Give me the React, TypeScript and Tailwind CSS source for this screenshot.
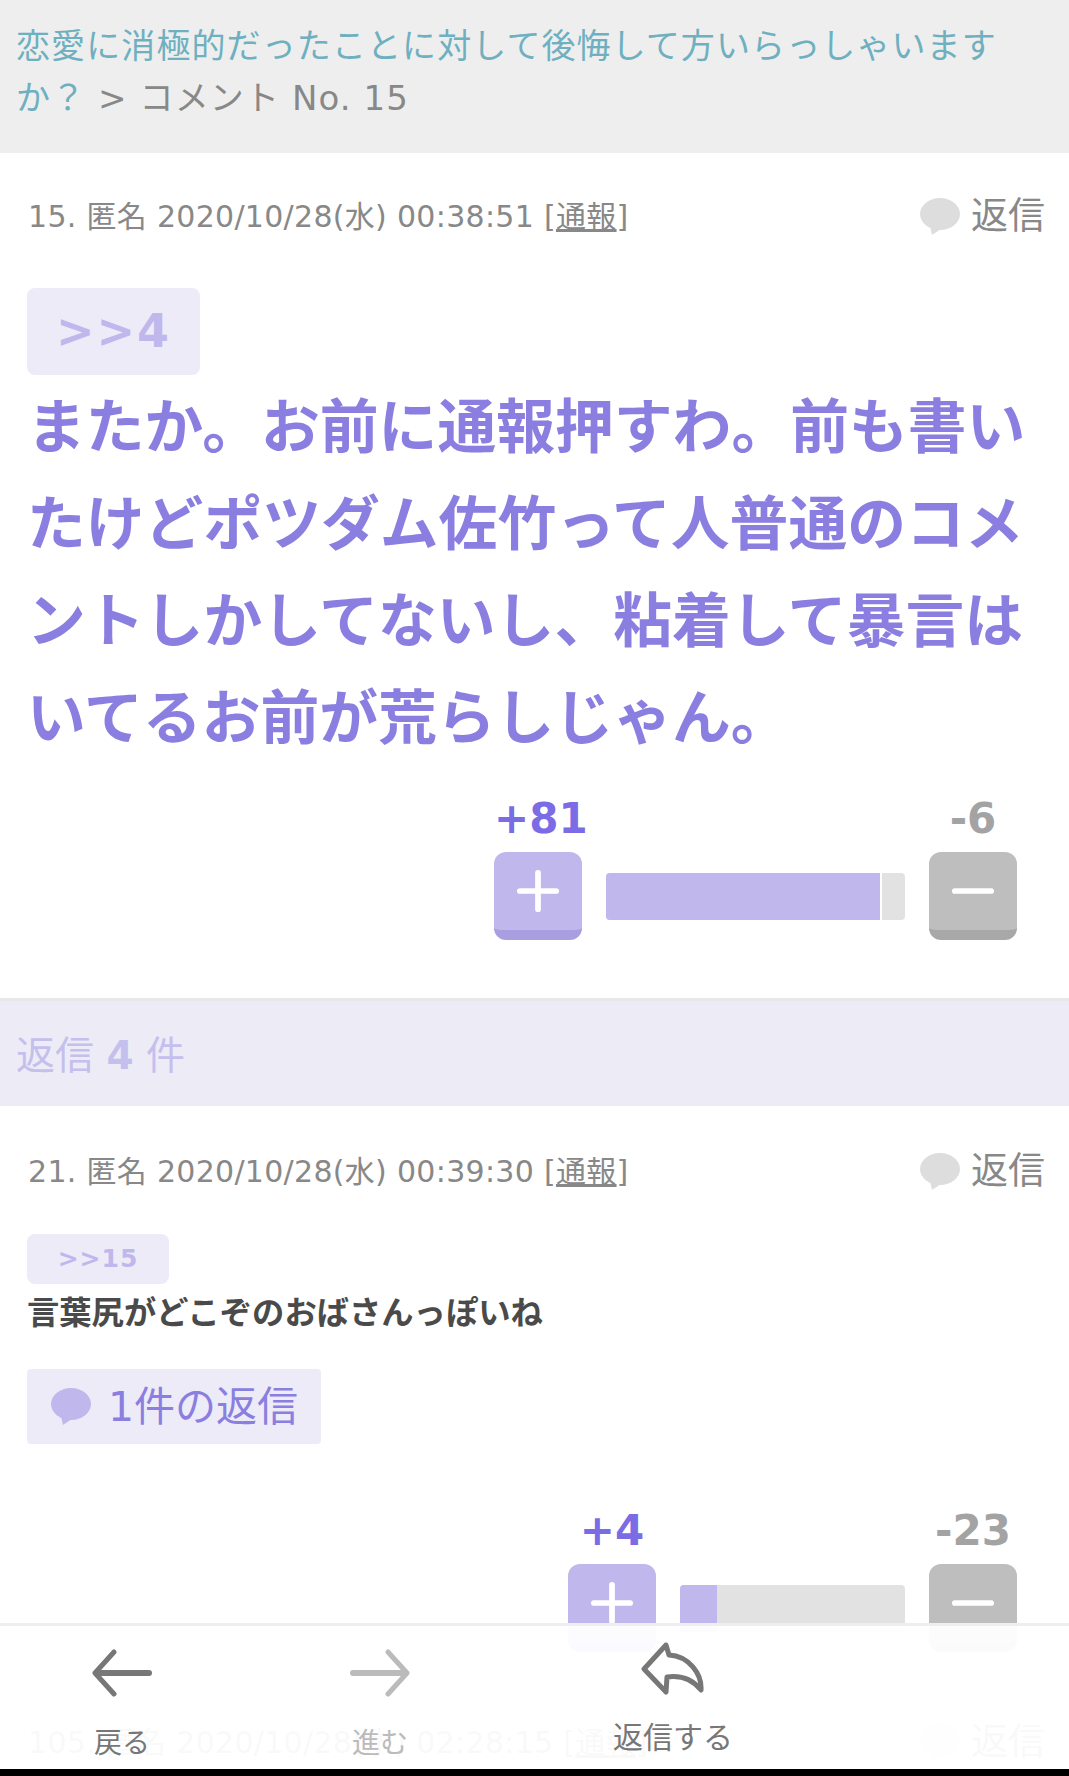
const BASE = "font-['DejaVu_Sans','Noto_Sans_CJK_JP',sans-serif]";

function Bubble({ className }: { className: string }) {
  return (
    <svg viewBox="0 0 40 38" className={className} fill="currentColor">
      <ellipse cx="20" cy="16" rx="20" ry="16" />
      <path d="M10 28 L12 37 L21 31 Z" />
    </svg>
  );
}

function Meta({ no, time }: { no: string; time: string }) {
  return (
    <div className="flex items-center justify-between pl-[28px] pr-[24px] text-[#888]">
      <p className="text-[30px] leading-[40px] tracking-[0.3px]">
        {no}. 匿名 2020/10/28(水) {time} [<span className="underline">通報</span>]
      </p>
      <div className="flex items-center gap-[11px]">
        <Bubble className="h-[38px] w-[40px] text-[#ddd]" />
        <span className="text-[37px] leading-[48px]">返信</span>
      </div>
    </div>
  );
}

function VoteButton({ kind }: { kind: "plus" | "minus" }) {
  const plus = kind === "plus";
  return (
    <div
      className={`flex h-[88px] w-[88px] shrink-0 items-center justify-center rounded-[12px] border-b-[10px] ${
        plus ? "border-[#a99fe0] bg-[#c0b8ec]" : "border-[#a8a8a8] bg-[#bebebe]"
      }`}
    >
      <svg viewBox="0 0 44 44" className="h-[42px] w-[42px]" stroke="white" strokeWidth="6" strokeLinecap="round">
        <path d="M3 22H41" />
        {plus && <path d="M22 3V41" />}
      </svg>
    </div>
  );
}

function Votes({ up, down, fill, width, divider }: { up: string; down: string; fill: number; width: number; divider?: boolean }) {
  return (
    <div className="flex justify-end pr-[52px]">
      <div className="flex flex-col" style={{ width }}>
        <div className="flex justify-between text-[42px] font-bold leading-[44px]">
          <span className="w-[88px] text-center text-[#7b6ce6]">{up}</span>
          <span className="w-[88px] text-center text-[#a3a3a3]">{down}</span>
        </div>
        <div className="mt-[11px] flex items-start">
          <VoteButton kind="plus" />
          <div className="mx-[24px] mt-[21px] flex h-[47px] flex-1 overflow-hidden rounded-[4px] bg-[#e2e2e2]">
            <div
              className={`h-full bg-[#c0b8ec] ${divider ? "border-r-[2px] border-white" : ""}`}
              style={{ width: fill }}
            />
          </div>
          <VoteButton kind="minus" />
        </div>
      </div>
    </div>
  );
}

export default function App() {
  return (
    <div className={`relative h-[1776px] overflow-hidden bg-white ${BASE}`}>
      <header className="h-[153px] bg-[#eeeeee] px-[16px] pt-[20px] text-[34px] leading-[52px] tracking-[1.1px] text-[#888]">
        <a className="text-[#6fb0c0]">恋愛に消極的だったことに対して後悔して方いらっしゃいますか？</a>
        <span> &gt; コメント No. 15</span>
      </header>

      <section className="pt-[40px]">
        <Meta no="15" time="00:38:51" />
        <div className="pt-[47px] pl-[27px] pr-[30px]">
          <div className="flex h-[87px] w-[173px] items-center justify-center rounded-[8px] bg-[#edebf8] text-[46px] font-bold tracking-[2px] text-[#c0b8ec]">
            &gt;&gt;4
          </div>
          <p className="mt-[4px] text-[58.8px] font-bold leading-[97px] text-[#8a7fe0]">
            またか。お前に通報押すわ。前も書いたけどポツダム佐竹って人普通のコメントしかしてないし、粘着して暴言はいてるお前が荒らしじゃん。
          </p>
        </div>
        <div className="mt-[30px]">
          <Votes up="+81" down="-6" fill={276} width={523} divider />
        </div>
      </section>

      <div className="mt-[58px] h-[108px] border-t-[3px] border-[#e8e8e8] bg-[#edecf6] pl-[16px] text-[39px] leading-[110px] text-[#c5bfee]">
        返信 <b>4</b> 件
      </div>

      <section className="pt-[42px]">
        <Meta no="21" time="00:39:30" />
        <div className="pt-[38px] pl-[27px]">
          <div className="flex h-[50px] w-[142px] items-center justify-center rounded-[8px] bg-[#edebf8] text-[25px] font-bold tracking-[1px] text-[#c0b8ec]">
            &gt;&gt;15
          </div>
          <p className="mt-[7px] text-[32.3px] font-bold leading-[44px] text-[#4a4a4a]">言葉尻がどこぞのおばさんっぽいね</p>
          <div className="mt-[34px] flex h-[75px] w-[294px] items-center gap-[16px] rounded-[4px] bg-[#edebf8] pl-[23px] text-[#8a7fe0]">
            <Bubble className="h-[38px] w-[42px] text-[#c0b8ec]" />
            <span className="text-[41px] leading-[48px]">1件の返信</span>
          </div>
        </div>
        <div className="mt-[65px]">
          <Votes up="+4" down="-23" fill={37} width={449} />
        </div>
      </section>

      {/* next comment, mostly hidden behind the bar */}
      <div className="mt-[67px]">
        <Meta no="105" time="02:28:15" />
      </div>

      {/* Fixed bottom toolbar */}
      <nav className="absolute inset-x-0 bottom-[7px] flex h-[146px] items-start border-t-[3px] border-[#eeeeee] bg-white/95 pl-[77px] pt-[11px]">
        <div className="flex w-[90px] flex-col items-center">
          <div className="flex h-[72px] items-center justify-center">
            <svg viewBox="0 0 60 48" className="h-[48px] w-[60px]" fill="none" stroke="#777" strokeLinecap="round" strokeLinejoin="round">
              <path d="M22 3 L3 24 L22 45" strokeWidth="5" />
              <path d="M5 24 H57" strokeWidth="6" />
            </svg>
          </div>
          <span className="mt-[15px] text-[28px] leading-[40px] text-[#777]">戻る</span>
        </div>
        <div className="ml-[168px] flex w-[90px] flex-col items-center">
          <div className="flex h-[72px] items-center justify-center">
            <svg viewBox="0 0 60 48" className="h-[48px] w-[60px]" fill="none" stroke="#bbb" strokeLinecap="round" strokeLinejoin="round">
              <path d="M38 3 L57 24 L38 45" strokeWidth="5" />
              <path d="M3 24 H55" strokeWidth="6" />
            </svg>
          </div>
          <span className="mt-[15px] text-[28px] leading-[40px] text-[#bbb]">進む</span>
        </div>
        <div className="ml-[178px] mt-[5px] flex w-[140px] flex-col items-center">
          <svg viewBox="0 0 64 54" className="h-[54px] w-[64px]" fill="none" stroke="#777" strokeWidth="5" strokeLinejoin="round" strokeLinecap="round">
            <path d="M25 3 L3 27 L25 50 L26 35 C40 33 52 38 60 48 C61 32 48 14 28 13 Z" />
          </svg>
          <span className="mt-[22px] text-[30px] leading-[40px] text-[#777]">返信する</span>
        </div>
      </nav>
      <div className="absolute inset-x-0 bottom-0 h-[7px] bg-black" />
    </div>
  );
}
